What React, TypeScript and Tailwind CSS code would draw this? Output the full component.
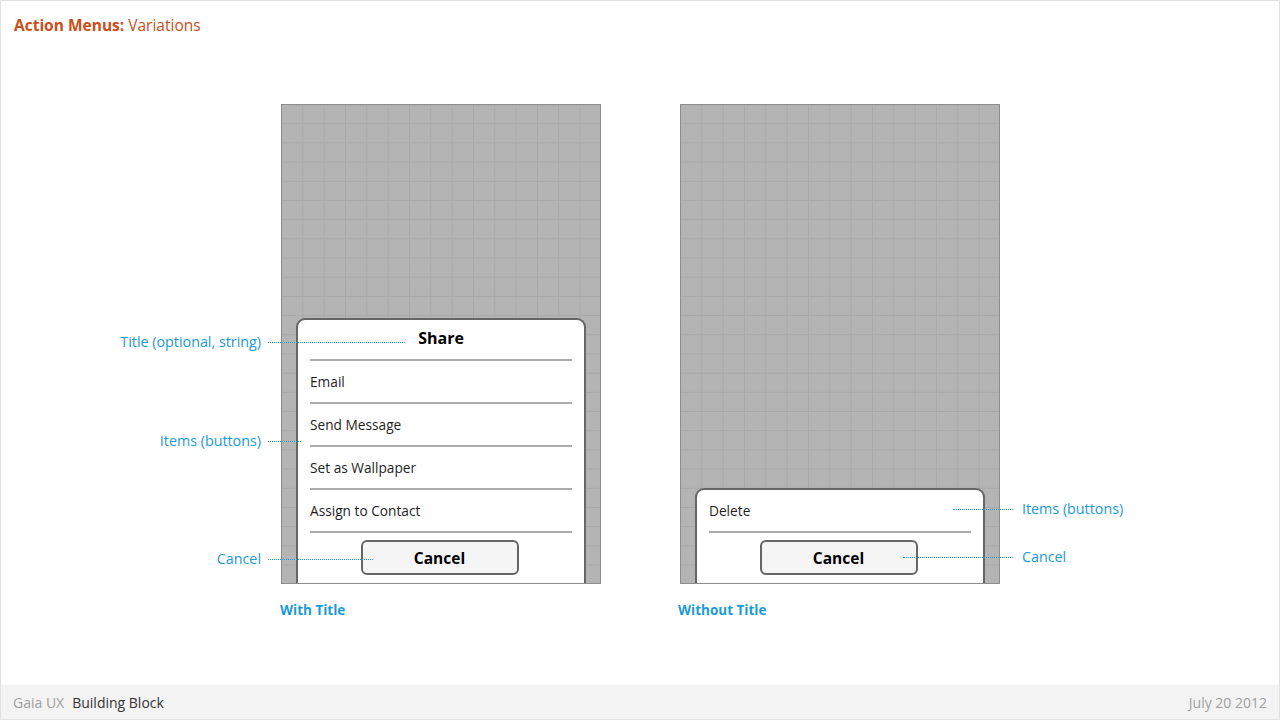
import React from 'react';

type MenuProps = {
  title?: string;
  items: string[];
};

// Gaia-style action menu sitting at the bottom of a phone frame
function ActionMenu({ title, items }: MenuProps) {
  return (
    <div className="mx-[14px] rounded-t-[9px] border-2 border-b-0 border-[#666666] bg-white px-[12px] pb-[8px]">
      {title && (
        <div className="flex h-[41px] items-center justify-center border-b-2 border-[#acacac] pb-[4px] text-[16px] font-bold text-black">
          {title}
        </div>
      )}
      {items.map((item) => (
        <div
          key={item}
          className="flex h-[43px] items-center border-b-2 border-[#acacac] pt-[1px] text-[13.7px] text-[#1e1e1e]"
        >
          {item}
        </div>
      ))}
      <div className="flex justify-center pt-[7px]">
        <button className="-ml-[3px] flex h-[35px] w-[158px] items-center justify-center rounded-[6px] border-2 border-[#666666] bg-[#f5f5f5] pt-[2px] text-[15.5px] font-bold text-black">
          Cancel
        </button>
      </div>
    </div>
  );
}

function Phone({ children }: { children: React.ReactNode }) {
  return (
    <div className="flex h-[480px] w-[320px] flex-col justify-end overflow-hidden border border-[#8c8c8c] bg-[#b4b4b4] bg-[linear-gradient(to_left,#a8a8a8_1px,transparent_1px),linear-gradient(to_top,#a8a8a8_1px,transparent_1px)] bg-[length:21.333px_19.2px]">
      {children}
    </div>
  );
}

export default function App() {
  return (
    <div className="relative flex h-[720px] w-[1280px] flex-col border border-[#e2e2e2] bg-white font-['Open_Sans',sans-serif]">
      <header className="h-[48px] px-[13px] pt-[12px] text-[15.5px] leading-[24px] text-[#cc4d17]">
        <span className="font-bold">Action Menus:</span> Variations
      </header>

      <main className="flex flex-1 gap-[79px] pl-[280px] pt-[55px]">
        <div className="flex flex-col">
          <Phone>
            <ActionMenu
              title="Share"
              items={['Email', 'Send Message', 'Set as Wallpaper', 'Assign to Contact']}
            />
          </Phone>
          <div className="mt-[16px] -ml-[1px] text-[13.5px] font-bold leading-[20px] text-[#1b9ad8]">With Title</div>
        </div>

        <div className="flex flex-col">
          <Phone>
            <ActionMenu items={['Delete']} />
          </Phone>
          <div className="mt-[16px] -ml-[2px] text-[13.5px] font-bold leading-[20px] text-[#1b9ad8]">
            Without Title
          </div>
        </div>
      </main>

      {/* callouts, left side */}
      <div className="absolute left-0 top-[331px] flex items-center text-[14.3px] leading-[20px] text-[#1b9ad8]">
        <span className="w-[260px] text-right">Title (optional, string)</span>
        <span className="ml-[7px] w-[137px] border-t border-dotted border-[#1b9ad8]" />
      </div>
      <div className="absolute left-0 top-[430px] flex items-center text-[14.3px] leading-[20px] text-[#1b9ad8]">
        <span className="w-[260px] text-right">Items (buttons)</span>
        <span className="ml-[7px] w-[33px] border-t border-dotted border-[#1b9ad8]" />
      </div>
      <div className="absolute left-0 top-[548px] flex items-center text-[14.3px] leading-[20px] text-[#1b9ad8]">
        <span className="w-[260px] text-right">Cancel</span>
        <span className="ml-[7px] w-[105px] border-t border-dotted border-[#1b9ad8]" />
      </div>

      {/* callouts, right side */}
      <div className="absolute left-[952px] top-[498px] flex items-center text-[14.3px] leading-[20px] text-[#1b9ad8]">
        <span className="w-[60px] border-t border-dotted border-[#1b9ad8]" />
        <span className="ml-[9px]">Items (buttons)</span>
      </div>
      <div className="absolute left-[902px] top-[546px] flex items-center text-[14.3px] leading-[20px] text-[#1b9ad8]">
        <span className="w-[110px] border-t border-dotted border-[#1b9ad8]" />
        <span className="ml-[9px]">Cancel</span>
      </div>

      <footer className="flex h-[34px] items-center justify-between bg-[#f3f3f3] px-[12px] text-[14px]">
        <div className="flex gap-[8px]">
          <span className="text-[#a0a0a0]">Gaia UX</span>
          <span className="text-[#333333]">Building Block</span>
        </div>
        <span className="text-[#a0a0a0]">July 20 2012</span>
      </footer>
    </div>
  );
}
